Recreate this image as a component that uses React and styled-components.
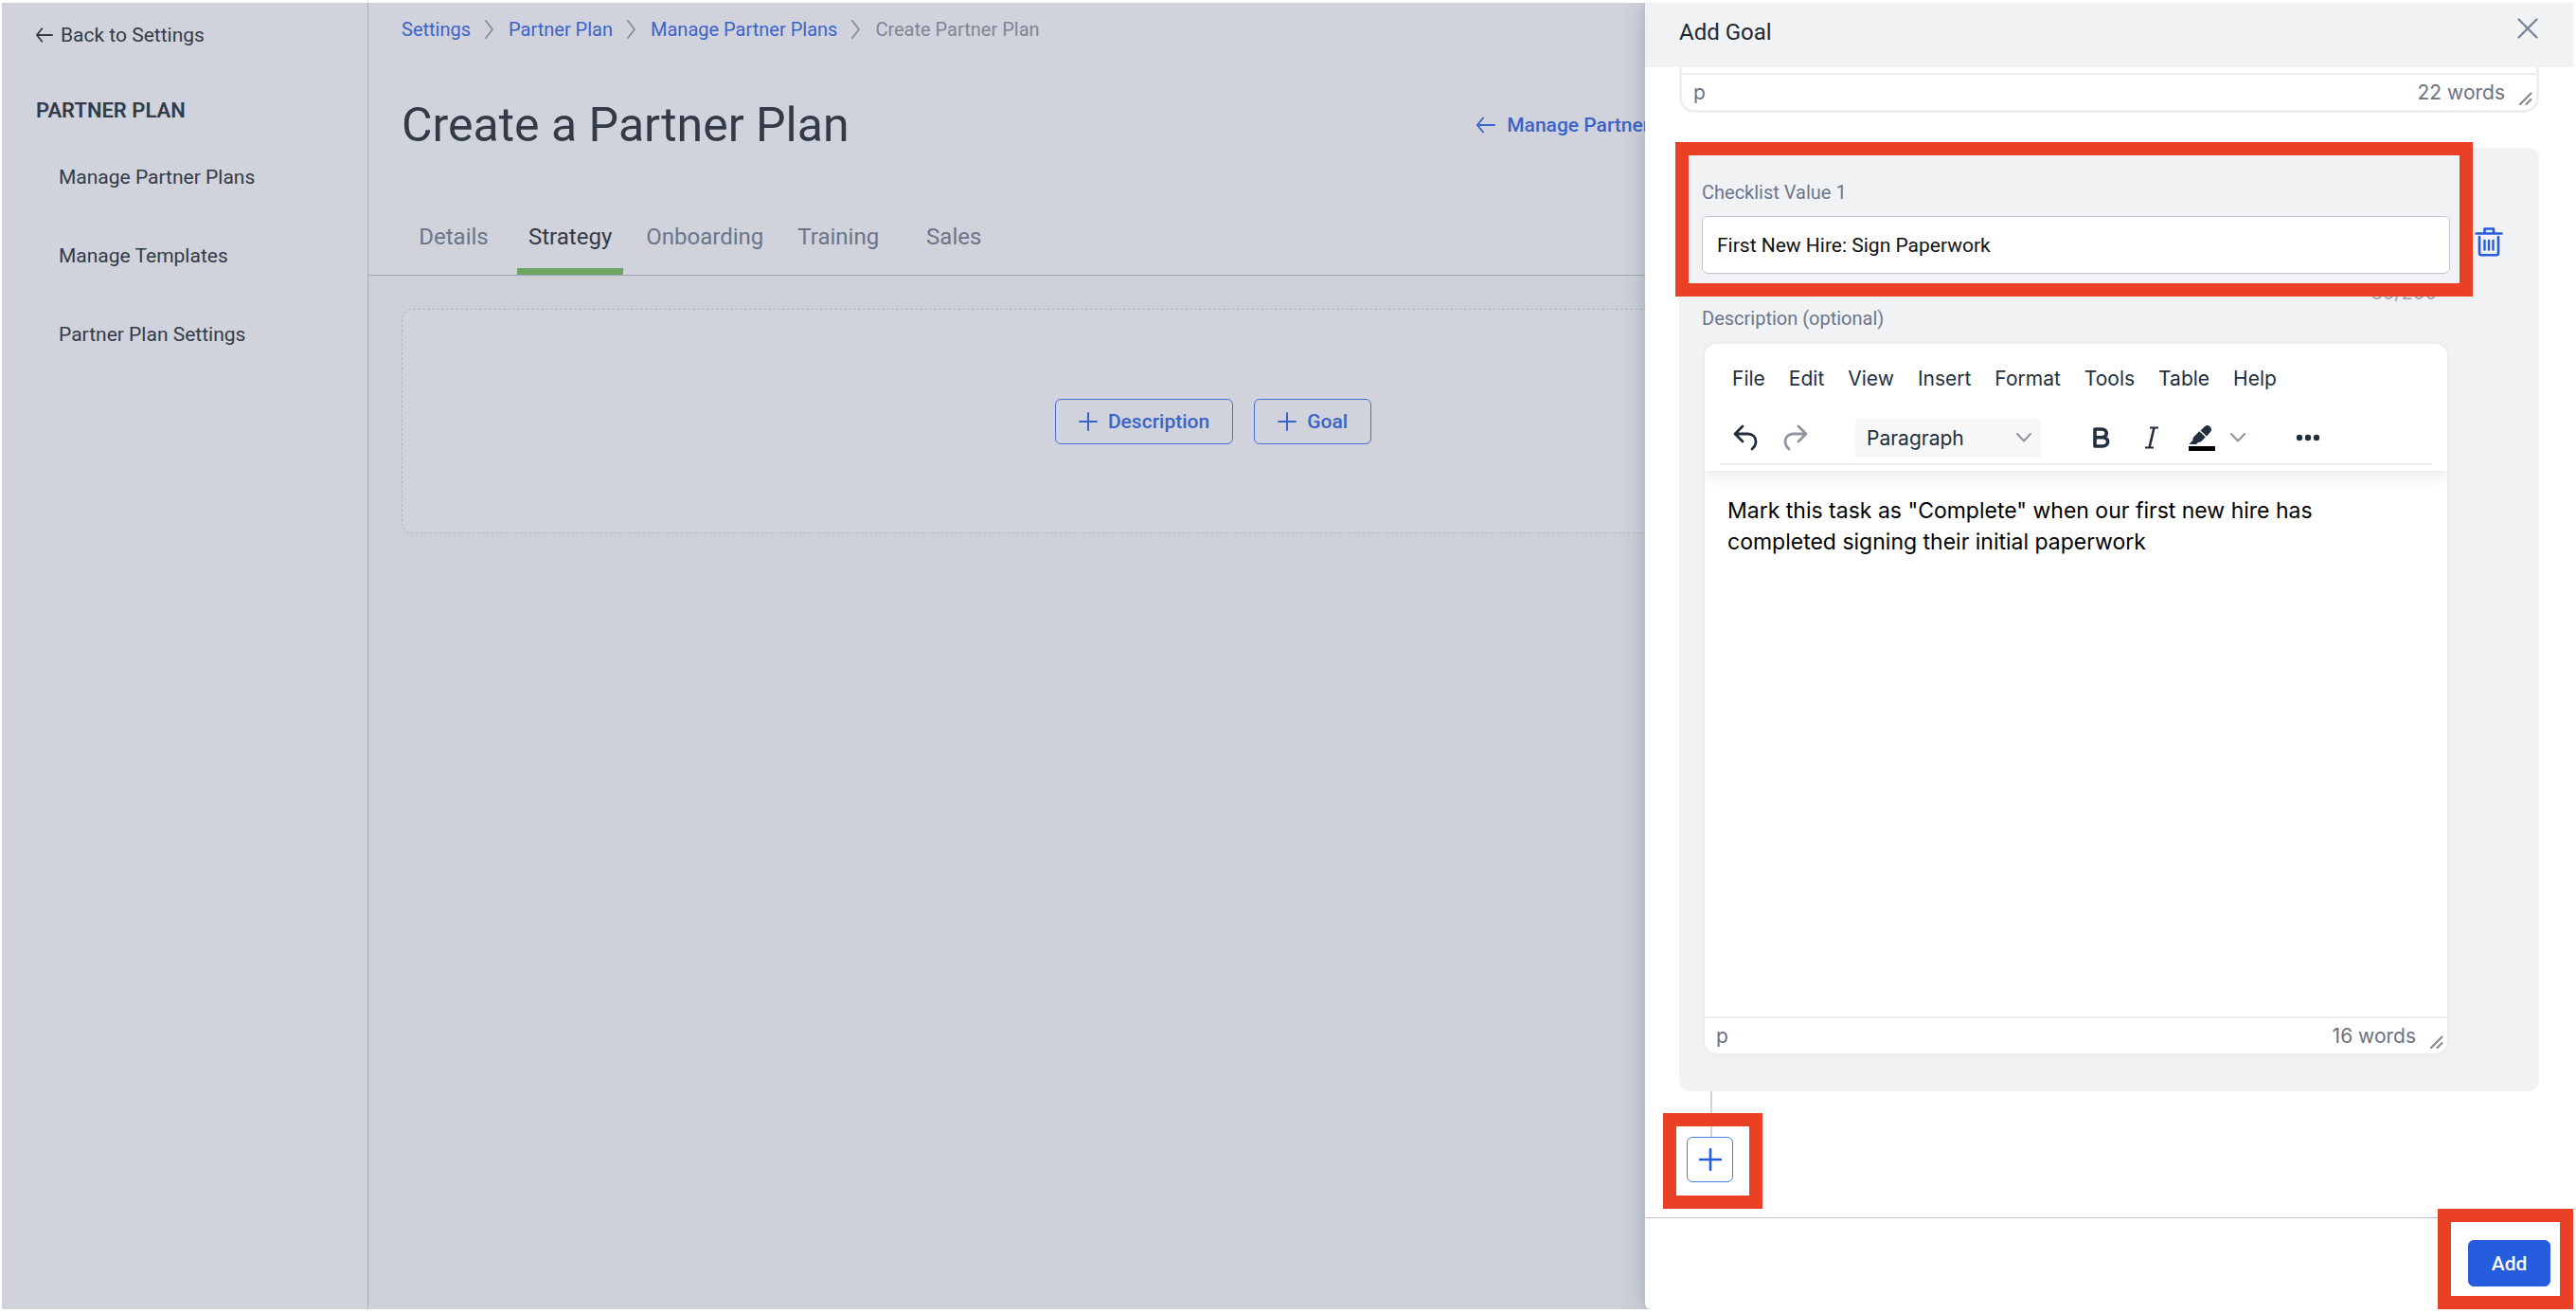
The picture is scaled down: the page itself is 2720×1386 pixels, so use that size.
import React, { useState } from 'react';
import styled, { createGlobalStyle } from 'styled-components';

const GlobalStyle = createGlobalStyle`
  * {
    box-sizing: border-box;
  }

  body {
    margin: 0;
    background: #ffffff;
    font-family: Roboto, 'Liberation Sans', sans-serif;
    color: #333b48;
  }

  button,
  input,
  select,
  textarea {
    font-family: inherit;
  }
`;

const ArrowLeftIcon = ({ size = 18, stroke = 2 }) => (
  <svg width={size} height={size} viewBox="0 0 20 20" fill="none" stroke="currentColor" strokeWidth={stroke} strokeLinecap="round" strokeLinejoin="round">
    <path d="M19 10H1M7 2.500L1 10l6 7.500" />
  </svg>
);

const PlusIcon = ({ size = 20, stroke = 2 }) => (
  <svg width={size} height={size} viewBox="0 0 20 20" fill="none" stroke="currentColor" strokeWidth={stroke} strokeLinecap="round">
    <path d="M10 1v18M1 10h18" />
  </svg>
);

const CrumbIcon = () => (
  <svg width="10" height="20" viewBox="0 0 10 20" fill="none" stroke="#8791a3" strokeWidth="2" strokeLinecap="round" strokeLinejoin="round">
    <path d="M1 1l7 9-7 9" />
  </svg>
);

const CloseIcon = () => (
  <svg width="24" height="24" viewBox="0 0 24 24" fill="none" stroke="currentColor" strokeWidth="2.4" strokeLinecap="round">
    <path d="M2.5 2.5l19 19M21.5 2.5l-19 19" />
  </svg>
);

const TrashIcon = () => (
  <svg width="30" height="32" viewBox="0 0 30 32" fill="none" stroke="currentColor" strokeWidth="2.6" strokeLinecap="round" strokeLinejoin="round">
    <path d="M1.5 7.5h27M10.5 7V2.5h9.500V7M5 11v17c0 1.500.8 2.300 2.300 2.300h15.400c1.500 0 2.300-.8 2.300-2.300V11" />
    <path d="M10.500 15v9.500M15 15v9.500M19.500 15v9.500" strokeWidth="2.4" />
  </svg>
);

const UndoIcon = () => (
  <svg width="26" height="28" viewBox="0 0 26 28" fill="none" stroke="currentColor" strokeWidth="2.8" strokeLinecap="round" strokeLinejoin="round">
    <path d="M10 2L2 10l8 8M2 10h13.500c5 0 8.500 3.200 8.500 8 0 3-1.200 5.500-4 8" />
  </svg>
);

const RedoIcon = () => (
  <svg width="26" height="28" viewBox="0 0 26 28" fill="none" stroke="currentColor" strokeWidth="2.8" strokeLinecap="round" strokeLinejoin="round">
    <path d="M16 2l8 8-8 8M24 10H10.500C5.500 10 2 13.200 2 18c0 3 1.200 5.500 4 8" />
  </svg>
);

const ChevronIcon = () => (
  <svg width="16" height="10" viewBox="0 0 16 10" fill="none" stroke="#8f959f" strokeWidth="2" strokeLinecap="round" strokeLinejoin="round">
    <path d="M1 1l7 7.500L15 1" />
  </svg>
);

const BoldIcon = () => (
  <svg width="18" height="22" viewBox="0 0 18 22" fill="none" stroke="currentColor" strokeWidth="3.6" strokeLinejoin="round">
    <path d="M2 2v18h8c7.500 0 7.500-9.300 0-9.300H2h7c7 0 7-8.700 0-8.700H2z" />
  </svg>
);

const ItalicIcon = () => (
  <svg width="14" height="24" viewBox="0 0 14 24" fill="none" stroke="currentColor" strokeWidth="1.8">
    <path d="M5 1.500h9M0 22.500h9" />
    <path d="M9.500 1.500l-5 21" strokeWidth="2.6" />
  </svg>
);

const HighlightIcon = () => (
  <svg width="28" height="28" viewBox="0 0 28 28" fill="currentColor">
    <path d="M16.600 2.600c1.800-1.800 3.800-2.200 5.600-.6s2.600 3.800 1 5.700l-4.200 4.700-6.500-6z" />
    <path d="M11.300 7.300l6.500 6-3.800 4.200c-1.500 1.500-3 1.200-4 1.500L8 21H.5l4-4.500c-.2-2 .5-3 2-4.500z" />
    <path d="M0 23h28v5H0z" fill="#000000" />
  </svg>
);

const MoreIcon = () => (
  <svg width="26" height="8" viewBox="0 0 26 8" fill="currentColor">
    <circle cx="4" cy="4" r="3.2" />
    <circle cx="13" cy="4" r="3.2" />
    <circle cx="22" cy="4" r="3.2" />
  </svg>
);

const ResizeIcon = () => (
  <svg width="14" height="14" viewBox="0 0 14 14" fill="none" stroke="#81868e" strokeWidth="2" strokeLinecap="round">
    <path d="M1 13L12.500 1.500M7.500 13l5-5" />
  </svg>
);

const NAV_ITEMS = ['Manage Partner Plans', 'Manage Templates', 'Partner Plan Settings'];
const CRUMBS = ['Settings', 'Partner Plan', 'Manage Partner Plans'];
const TABS = ['Details', 'Strategy', 'Onboarding', 'Training', 'Sales'];
const MENUS = ['File', 'Edit', 'View', 'Insert', 'Format', 'Tools', 'Table', 'Help'];

const StatusBar = ({ words }) => (
  <Status>
    <span>p</span>
    <WordCount>{words} words</WordCount>
    <ResizeIcon />
  </Status>
);

const App = () => {
  const [activeTab, setActiveTab] = useState('Strategy');
  const [value, setValue] = useState('First New Hire: Sign Paperwork');
  const [description, setDescription] = useState(
    'Mark this task as "Complete" when our first new hire has\ncompleted signing their initial paperwork'
  );

  return (
    <Page>
      <GlobalStyle />
      <Shell>
        <Sidebar>
          <BackLink href="#settings">
            <ArrowLeftIcon />
            Back to Settings
          </BackLink>
          <SidebarTitle>PARTNER PLAN</SidebarTitle>
          {NAV_ITEMS.map((item) => (
            <NavLink key={item} href="#nav">{item}</NavLink>
          ))}
        </Sidebar>

        <Main>
          <TopArea>
            <Breadcrumb>
              {CRUMBS.map((crumb) => (
                <React.Fragment key={crumb}>
                  <Crumb href="#crumb">{crumb}</Crumb>
                  <CrumbIcon />
                </React.Fragment>
              ))}
              <CurrentCrumb>Create Partner Plan</CurrentCrumb>
            </Breadcrumb>
            <TitleRow>
              <PageTitle>Create a Partner Plan</PageTitle>
              <ManageLink href="#plans">
                <ArrowLeftIcon size={20} />
                Manage Partner Plans
              </ManageLink>
            </TitleRow>
            <Tabs>
              {TABS.map((tab) => (
                <Tab key={tab} $active={tab === activeTab} onClick={() => setActiveTab(tab)}>
                  {tab}
                </Tab>
              ))}
            </Tabs>
          </TopArea>
          <DropZone>
            <OutlineButton><PlusIcon />Description</OutlineButton>
            <OutlineButton><PlusIcon />Goal</OutlineButton>
          </DropZone>
        </Main>

        <Drawer>
          <DrawerHeader>
            <DrawerTitle>Add Goal</DrawerTitle>
            <CloseButton aria-label="Close"><CloseIcon /></CloseButton>
          </DrawerHeader>

          <DrawerBody>
            <EditorTail>
              <StatusBar words={22} />
            </EditorTail>

            <Card>
              <CardMain>
                <Field>
                  <Label htmlFor="checklist-value">Checklist Value 1</Label>
                  <Input
                    id="checklist-value"
                    type="text"
                    value={value}
                    onChange={(e) => setValue(e.target.value)}
                  />
                  <Highlight $top={41} $right={24} $bottom={24} $left={28} />
                </Field>
                <Counter>{value.length}/200</Counter>
                <Label htmlFor="description">Description (optional)</Label>
                <Editor>
                  <EditorHeader>
                    <MenuBar>
                      {MENUS.map((menu) => (
                        <MenuButton key={menu}>{menu}</MenuButton>
                      ))}
                    </MenuBar>
                    <Toolbar>
                      <ToolButton aria-label="Undo"><UndoIcon /></ToolButton>
                      <ToolButton aria-label="Redo" $muted><RedoIcon /></ToolButton>
                      <SelectWrap>
                        <Select aria-label="Block format" defaultValue="Paragraph">
                          <option>Paragraph</option>
                        </Select>
                        <SelectArrow><ChevronIcon /></SelectArrow>
                      </SelectWrap>
                      <ToolButton aria-label="Bold"><BoldIcon /></ToolButton>
                      <ToolButton aria-label="Italic"><ItalicIcon /></ToolButton>
                      <ToolButton aria-label="Background color"><HighlightIcon /></ToolButton>
                      <ArrowButton aria-label="Background color menu"><ChevronIcon /></ArrowButton>
                      <MoreButton aria-label="More"><MoreIcon /></MoreButton>
                    </Toolbar>
                  </EditorHeader>
                  <TextArea
                    id="description"
                    spellCheck={false}
                    value={description}
                    onChange={(e) => setDescription(e.target.value)}
                  />
                  <StatusBar words={16} />
                </Editor>
              </CardMain>
              <DeleteButton aria-label="Delete"><TrashIcon /></DeleteButton>
            </Card>

            <Connector />
            <AddRow>
              <PlusButton aria-label="Add checklist value"><PlusIcon size={24} stroke={2.2} /></PlusButton>
              <Highlight $top={25} $right={31} $bottom={28} $left={25} />
            </AddRow>
          </DrawerBody>

          <DrawerFooter>
            <AddWrap>
              <AddButton>Add</AddButton>
              <Highlight $top={33} $right={24} $bottom={24} $left={32} />
            </AddWrap>
          </DrawerFooter>
        </Drawer>
      </Shell>
    </Page>
  );
};

export default App;

const Page = styled.div`
  height: 100vh;
  padding: 3px 3px 4px 2px;
  overflow: hidden;
`;

const Shell = styled.div`
  position: relative;
  display: flex;
  height: 100%;
  background: #cdd0d9;
  overflow: hidden;
`;

const Sidebar = styled.nav`
  display: flex;
  flex-direction: column;
  width: 387px;
  flex-shrink: 0;
  padding: 20px 36px;
  background: #d0d3db;
  border-right: 1px solid #a9adbb;
`;

const BackLink = styled.a`
  display: flex;
  align-items: center;
  gap: 8px;
  font-size: 21px;
  line-height: 28px;
  color: #333b48;
  text-decoration: none;
`;

const SidebarTitle = styled.h2`
  margin: 52px 0 28px;
  font-size: 22px;
  font-weight: 600;
  line-height: 28px;
`;

const NavLink = styled.a`
  margin-bottom: 27px;
  padding: 14px 24px;
  font-size: 21px;
  line-height: 28px;
  color: #333b48;
  text-decoration: none;
`;

const Main = styled.main`
  flex: 1;
  min-width: 0;
`;

const TopArea = styled.div`
  padding: 14px 35px 0;
  background: #d0d3db;
  border-bottom: 1px solid #a3a7b7;
`;

const Breadcrumb = styled.nav`
  display: flex;
  align-items: center;
  gap: 15px;
  font-size: 20px;
  line-height: 28px;
`;

const Crumb = styled.a`
  color: #3c63c8;
  text-decoration: none;
`;

const CurrentCrumb = styled.span`
  color: #7d8697;
`;

const TitleRow = styled.div`
  display: flex;
  align-items: center;
  justify-content: space-between;
  max-width: 1714px;
  margin-top: 52px;
  padding-right: 338px;
`;

const PageTitle = styled.h1`
  margin: 0;
  font-size: 50px;
  font-weight: 400;
  line-height: 70px;
`;

const ManageLink = styled.a`
  display: flex;
  align-items: center;
  gap: 12px;
  font-size: 21px;
  font-weight: 500;
  color: #3c63c8;
  text-decoration: none;
`;

const Tabs = styled.div`
  display: flex;
  gap: 12px;
  margin-top: 43px;
`;

const Tab = styled.button`
  min-width: 110px;
  height: 80px;
  padding: 0 12px;
  border: none;
  background: ${({ $active }) =>
    $active ? 'linear-gradient(#6fa564, #6fa564) bottom / 100% 7px no-repeat' : 'none'};
  font-size: 24px;
  font-weight: 400;
  color: ${({ $active }) => ($active ? '#333b48' : '#6b7589')};
  cursor: pointer;
`;

const DropZone = styled.section`
  display: flex;
  align-items: center;
  justify-content: center;
  gap: 22px;
  max-width: 1714px;
  height: 237px;
  margin: 35px;
  background: #d0d3db;
  border: 1px dashed #b3b7c3;
  border-radius: 12px;
`;

const OutlineButton = styled.button`
  display: flex;
  align-items: center;
  gap: 11px;
  height: 48px;
  padding: 0 24px;
  border: 1px solid #4a70cd;
  border-radius: 6px;
  background: none;
  font-size: 21px;
  font-weight: 500;
  color: #3c63c8;
  cursor: pointer;
`;

const Drawer = styled.aside`
  position: absolute;
  top: 0;
  right: 0;
  bottom: 0;
  display: flex;
  flex-direction: column;
  width: 980px;
  background: #ffffff;
  border-bottom-left-radius: 6px;
  box-shadow: 0 0 24px rgba(60, 68, 90, 0.3);
`;

const DrawerHeader = styled.header`
  display: flex;
  justify-content: space-between;
  height: 68px;
  flex-shrink: 0;
  padding: 13px 36px;
  background: #f1f2f4;
`;

const DrawerTitle = styled.h2`
  margin: 0;
  font-size: 24px;
  font-weight: 400;
  line-height: 36px;
  color: #22272f;
`;

const CloseButton = styled.button`
  display: flex;
  width: 24px;
  height: 28px;
  padding: 2px 0;
  border: none;
  background: none;
  color: #7b869a;
  cursor: pointer;
`;

const DrawerBody = styled.div`
  flex: 1;
  min-height: 0;
  padding: 0 36px;
  overflow: hidden;
`;

const EditorTail = styled.div`
  padding-top: 6px;
  border: 3px solid #eeeeee;
  border-top: none;
  border-radius: 0 0 16px 16px;
`;

const Status = styled.div`
  display: flex;
  align-items: center;
  height: 39px;
  padding: 0 4px 0 12px;
  border-top: 2px solid #eeeeee;
  font-family: Inter, sans-serif;
  font-size: 21px;
  color: #6b7280;

  svg {
    align-self: flex-end;
    margin-bottom: 5px;
  }
`;

const WordCount = styled.span`
  margin-left: auto;
  margin-right: 15px;
`;

const Card = styled.section`
  display: flex;
  margin-top: 37px;
  padding: 35px 36px 37px 24px;
  background: #f1f2f4;
  border-radius: 12px;
`;

const CardMain = styled.div`
  flex: 1;
  min-width: 0;
`;

const Field = styled.div`
  position: relative;
`;

const Label = styled.label`
  display: block;
  font-size: 20px;
  line-height: 24px;
  color: #6b778c;
`;

const Input = styled.input`
  display: block;
  width: 100%;
  height: 61px;
  margin-top: 13px;
  padding: 0 15px;
  border: 1px solid #c0c5d1;
  border-radius: 6px;
  background: #ffffff;
  font-size: 21px;
  color: #111111;
`;

const Highlight = styled.div`
  position: absolute;
  top: -${({ $top }) => $top}px;
  right: -${({ $right }) => $right}px;
  bottom: -${({ $bottom }) => $bottom}px;
  left: -${({ $left }) => $left}px;
  border: 14px solid #ea4025;
  pointer-events: none;
`;

const Counter = styled.div`
  margin: 8px 0 3px;
  padding-right: 14px;
  font-family: Inter, sans-serif;
  font-size: 20px;
  line-height: 24px;
  text-align: right;
  color: #99a1b1;
`;

const Editor = styled.div`
  margin-top: 12px;
  border: 3px solid #eeeeee;
  border-radius: 16px;
  background: #ffffff;
  overflow: hidden;
  font-family: Inter, sans-serif;
`;

const EditorHeader = styled.div`
  position: relative;
  padding-bottom: 6px;
  background: #ffffff;
  box-shadow: 0 4px 16px rgba(34, 47, 62, 0.12);
`;

const MenuBar = styled.div`
  display: flex;
  align-items: center;
  gap: 1px;
  height: 72px;
  padding: 0 17px;
`;

const MenuButton = styled.button`
  padding: 8px 12px;
  border: none;
  background: none;
  font-size: 21px;
  color: #222f3e;
  cursor: pointer;
`;

const Toolbar = styled.div`
  display: flex;
  align-items: center;
  height: 56px;
  margin: 0 16px;
  border-bottom: 2px solid #eeeeee;
`;

const ToolButton = styled.button`
  display: flex;
  align-items: center;
  justify-content: center;
  width: 53px;
  height: 42px;
  padding: 0;
  border: none;
  background: none;
  color: ${({ $muted }) => ($muted ? '#8f959f' : '#222f3e')};
  cursor: pointer;
`;

const ArrowButton = styled(ToolButton)`
  width: 24px;
`;

const MoreButton = styled(ToolButton)`
  margin-left: 35px;
`;

const SelectWrap = styled.div`
  position: relative;
  width: 196px;
  margin: 0 37px;
`;

const Select = styled.select`
  width: 100%;
  height: 41px;
  padding: 0 12px;
  border: none;
  border-radius: 4px;
  background: #f7f7f7;
  appearance: none;
  font-size: 21px;
  color: #222f3e;
`;

const SelectArrow = styled.span`
  position: absolute;
  top: 0;
  right: 10px;
  bottom: 0;
  display: flex;
  align-items: center;
  pointer-events: none;
`;

const TextArea = styled.textarea`
  display: block;
  width: 100%;
  height: 576px;
  padding: 26px 24px;
  border: none;
  outline: none;
  resize: none;
  background: #ffffff;
  font-size: 23px;
  line-height: 33px;
  color: #000000;
`;

const DeleteButton = styled.button`
  display: flex;
  align-self: flex-start;
  width: 34px;
  height: 36px;
  margin: 46px 0 0 24px;
  padding: 2px;
  border: none;
  background: none;
  color: #265ddf;
  cursor: pointer;
`;

const Connector = styled.div`
  width: 2px;
  height: 48px;
  margin-left: 33px;
  background: #d0d4db;
`;

const AddRow = styled.div`
  position: relative;
  width: 49px;
  margin-left: 8px;
`;

const PlusButton = styled.button`
  display: flex;
  align-items: center;
  justify-content: center;
  width: 49px;
  height: 48px;
  padding: 0;
  border: 1px solid #4a78e4;
  border-radius: 6px;
  background: #ffffff;
  color: #265ddf;
  cursor: pointer;
`;

const DrawerFooter = styled.footer`
  display: flex;
  justify-content: flex-end;
  flex-shrink: 0;
  padding: 23px 24px 24px;
  border-top: 1px solid #bfc2cd;
`;

const AddWrap = styled.div`
  position: relative;
`;

const AddButton = styled.button`
  width: 87px;
  height: 49px;
  border: 1px solid #265ddf;
  border-radius: 6px;
  background: #265ddf;
  font-size: 21px;
  font-weight: 500;
  color: #ffffff;
  cursor: pointer;
`;
